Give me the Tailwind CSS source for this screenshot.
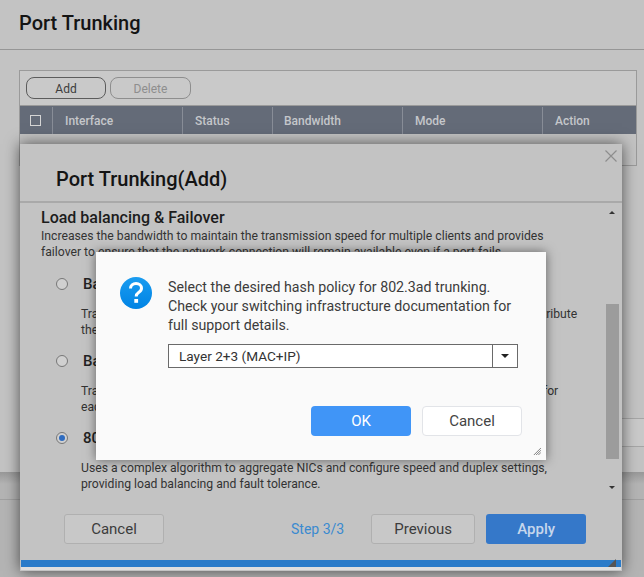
<!DOCTYPE html>
<html lang="en">
<head>
    <meta charset="UTF-8">
    <script src="https://cdn.jsdelivr.net/npm/@tailwindcss/browser@4"></script>
    <title>Port Trunking</title>
</head>
<body class="relative w-[644px] h-[577px] overflow-hidden bg-[#c3c3c3] font-['Roboto',sans-serif]">

    <!-- Page behind the windows -->
    <header class="h-[50px] border-b border-[#969696] pl-[19px] pt-[9px] text-[20px] leading-[28px] font-medium text-[#141414]">Port Trunking</header>

    <section class="ml-[19px] mt-[20px] w-[618px] h-[96px] border border-[#9a9a9a]">
        <div class="h-[35px] bg-[#c9c9c9] flex items-center gap-[4px] pl-[6px] border-b border-[#9a9a9a]">
            <button class="w-[80px] h-[22px] pt-px rounded-[8px] border border-[#5c5c5c] text-[12px] text-[#3c3c3c]">Add</button>
            <button class="w-[81px] h-[22px] pt-px rounded-[8px] border border-[#8e8e8e] text-[12px] text-[#8e8e8e]">Delete</button>
        </div>
        <div class="h-[28px] pt-px bg-[#646b78] flex text-[12px] font-medium text-[#c5c7cb]">
            <div class="w-[33px] pr-[2px] flex items-center justify-center border-r border-[#888d97]"><span class="w-[11px] h-[11px] border border-[#d5d5d5]"></span></div>
            <div class="w-[130px] pl-[12px] flex items-center border-r border-[#888d97]">Interface</div>
            <div class="w-[90px] pl-[12px] flex items-center border-r border-[#888d97]">Status</div>
            <div class="w-[130px] pl-[11px] flex items-center border-r border-[#888d97]">Bandwidth</div>
            <div class="w-[140px] pl-[12px] flex items-center border-r border-[#888d97]">Mode</div>
            <div class="flex-1 pl-[12px] flex items-center">Action</div>
        </div>
    </section>

    <div class="absolute left-0 right-0 top-[472px] bottom-0 bg-[#b4b4b4]">
        <div class="h-[12px] bg-gradient-to-b from-[#989898] to-[#b4b4b4]"></div>
        <div class="mt-[15px] border-t border-[#a0a0a0]"></div>
    </div>
    <div class="absolute left-[622px] right-0 top-[418px] h-[29px] bg-[#c9c9c9] border-y border-[#a6a6a6]"></div>

    <!-- Port Trunking(Add) window -->
    <div class="absolute left-[20px] top-[144px] w-[602px] h-[427px] bg-[#c3c3c3] shadow-[0_0_14px_rgba(0,0,0,0.6)] flex flex-col">
        <div class="h-[59px] border-b-2 border-[#a9a9a9] pl-[36px] pt-[21px] text-[20px] leading-[28px] font-medium text-[#141414] relative">
            Port Trunking(Add)
            <svg class="absolute right-[5px] top-[6px]" width="12" height="12" viewBox="0 0 12 12" fill="none" stroke="#8d8d8d" stroke-width="1.2"><path d="M0.5 0.5L11.5 11.5M11.5 0.5L0.5 11.5"/></svg>
        </div>

        <div class="relative h-[298px] pl-[21px] overflow-hidden">
            <h2 class="mt-[5px] text-[16px] leading-[20px] font-medium text-[#1c1c1c]">Load balancing &amp; Failover</h2>
            <p class="text-[12.2px] leading-[16px] text-[#333] whitespace-nowrap">Increases the bandwidth to maintain the transmission speed for multiple clients and provides<br>failover to ensure that the network connection will remain available even if a port fails.</p>

            <div class="mt-[14px] ml-[15px] flex items-center gap-[15px]">
                <span class="w-[12px] h-[12px] rounded-full border border-[#777] bg-[#d0d0d0]"></span>
                <span class="text-[15px] leading-[20px] font-medium text-[#222]">Balance-tlb</span>
            </div>
            <p class="mt-[12px] ml-[40px] text-[12.2px] leading-[16px] text-[#333] whitespace-nowrap">Transmit traffic according to the current load on each network port so as to evenly distribute<br>the outgoing traffic.</p>

            <div class="mt-[13px] ml-[15px] flex items-center gap-[15px]">
                <span class="w-[12px] h-[12px] rounded-full border border-[#777] bg-[#d0d0d0]"></span>
                <span class="text-[15px] leading-[20px] font-medium text-[#222]">Balance-alb</span>
            </div>
            <p class="mt-[12px] ml-[40px] text-[12.2px] leading-[16px] text-[#333] whitespace-nowrap">Transmit and receive traffic according to the current load on each active network port for<br>each slave.</p>

            <div class="mt-[13px] ml-[15px] flex items-center gap-[15px]">
                <span class="w-[12px] h-[12px] rounded-full border border-[#777] bg-[#d0d0d0] flex items-center justify-center"><span class="w-[6px] h-[6px] rounded-full bg-[#2f6cc0]"></span></span>
                <span class="text-[15px] leading-[20px] font-medium text-[#222]">802.3ad dynamic</span>
            </div>
            <p class="mt-[12px] ml-[40px] text-[12.2px] leading-[16px] text-[#333] whitespace-nowrap">Uses a complex algorithm to aggregate NICs and configure speed and duplex settings,<br>providing load balancing and fault tolerance.</p>

            <!-- Scrollbar -->
            <div class="absolute right-[3px] top-0 bottom-0 w-[13px] bg-[#c3c3c3]">
                <div class="absolute left-[3px] top-[8px] w-0 h-0 border-x-[3px] border-x-transparent border-b-[3px] border-b-[#333]"></div>
                <div class="absolute left-0 top-[101px] w-[13px] h-[155px] bg-[#9c9c9c]"></div>
                <div class="absolute left-[3px] top-[283px] w-0 h-0 border-x-[3px] border-x-transparent border-t-[3px] border-t-[#333]"></div>
            </div>
        </div>

        <div class="flex items-center h-[30px] mt-[13px] pl-[44px] text-[15px]">
            <button class="w-[100px] h-[30px] rounded-[3px] border border-[#b0b0b0] bg-[#c8c8c8] text-[#3c3c3c]">Cancel</button>
            <span class="ml-[127px] text-[14px] text-[#3a8ad0]">Step 3/3</span>
            <button class="ml-[27px] w-[104px] h-[30px] rounded-[3px] border border-[#b0b0b0] bg-[#c8c8c8] text-[#3c3c3c]">Previous</button>
            <button class="ml-[11px] w-[100px] h-[30px] rounded-[3px] bg-[#3578c9] font-medium text-[#c5d6ec]">Apply</button>
        </div>

        <div class="absolute left-[1px] right-[1px] top-[416px] h-[7px] bg-[#2a7bc9]"></div>
        <div class="absolute left-[1px] right-[1px] top-[423px] h-[3px] bg-[#dfdfdf]"></div>
        <svg class="absolute right-[6px] top-[415px]" width="8" height="8" viewBox="0 0 8 8"><path d="M8 0V8H0Z" fill="#555"/></svg>
    </div>

    <!-- Hash policy dialog -->
    <div class="absolute left-[96px] top-[252px] w-[450px] h-[208px] bg-[#fafafa] shadow-[0_0_10px_rgba(0,0,0,0.5)]">
        <div class="flex gap-[16px] pl-[24px] pt-[25px]">
            <svg class="shrink-0" width="32" height="32" viewBox="0 0 32 32">
                <defs><linearGradient id="q" x1="0" y1="0" x2="0" y2="1"><stop offset="0" stop-color="#1a9cf0"/><stop offset="1" stop-color="#0083e4"/></linearGradient></defs>
                <circle cx="16" cy="16" r="16" fill="url(#q)"/>
                <path d="M10.5 11.5C10.5 8.5 13 6.5 16 6.5C19.2 6.5 21.5 8.5 21.5 11.2C21.5 13.4 20.2 14.5 18.6 15.6C17 16.7 16.2 17.5 16.2 19.6" fill="none" stroke="#fff" stroke-width="3"/>
                <rect x="14.3" y="22" width="3.8" height="3.8" fill="#fff"/>
            </svg>
            <p class="pt-px text-[14.2px] leading-[19px] text-[#3c3c3c]">Select the desired hash policy for 802.3ad trunking.<br>Check your switching infrastructure documentation for<br>full support details.</p>
        </div>
        <div class="ml-[72px] mt-[9px] w-[350px] h-[24px] border border-[#6a6a6a] bg-white flex text-[13.6px] text-[#333]">
            <span class="flex-1 pl-[10px] leading-[23px]">Layer 2+3 (MAC+IP)</span>
            <span class="w-[25px] border-l border-[#6a6a6a] flex items-center justify-center"><span class="w-0 h-0 border-x-[4px] border-x-transparent border-t-[4px] border-t-[#222]"></span></span>
        </div>
        <div class="flex gap-[11px] ml-[215px] mt-[38px] text-[15px]">
            <button class="w-[100px] h-[30px] rounded-[4px] bg-[#4095f7] text-white">OK</button>
            <button class="w-[100px] h-[30px] rounded-[4px] border border-[#e2e4e8] bg-white text-[#444]">Cancel</button>
        </div>
        <svg class="absolute right-[5px] bottom-[5px]" width="8" height="8" viewBox="0 0 9 9" stroke="#555" stroke-width="0.8"><path d="M9 1L1 9M9 3.5L3.5 9M9 6L6 9"/></svg>
    </div>

</body>
</html>
